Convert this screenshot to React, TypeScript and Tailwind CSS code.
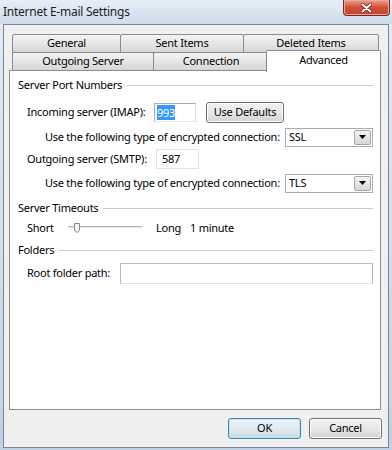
const font = { fontFamily: '"Noto Sans", "Open Sans", sans-serif' };

const Tab = ({ label, w, cls = "" }: { label: string; w: string; cls?: string }) => (
  <div
    className={`${w} ${cls} h-[19px] flex items-center justify-center border border-[#898c95] rounded-t-[2px] bg-gradient-to-b from-[#f4f4f4] via-[#e6e6e6] to-[#d6d6d6] text-[11px] text-black whitespace-nowrap`}
  >
    {label}
  </div>
);

const Header = ({ label }: { label: string }) => (
  <div className="flex items-center pl-[8px] pr-[7px]">
    <span className="text-[11px] whitespace-nowrap">{label}</span>
    <div className="flex-1 ml-[5px] h-px bg-[#c6cbd0]" />
  </div>
);

const Select = ({ value }: { value: string }) => (
  <div className="w-[88px] h-[19px] border border-[#a9adb4] bg-white flex items-center justify-between pl-[3px] pr-px">
    <span className="text-[11px]">{value}</span>
    <div className="w-[17px] h-[15px] border border-[#a2a6ad] rounded-[2px] bg-gradient-to-b from-[#f3f3f3] to-[#d6d6d6] flex items-center justify-center">
      <svg width="7" height="4" viewBox="0 0 7 4">
        <path d="M0 0h7L3.5 4z" fill="#000" />
      </svg>
    </div>
  </div>
);

const WinButton = ({ label, w, primary = false }: { label: string; w: string; primary?: boolean }) => (
  <div
    className={`${w} h-[21px] rounded-[3px] border flex items-center justify-center text-[11px] whitespace-nowrap ${
      primary
        ? "border-[#3c7fb1] shadow-[inset_0_0_0_1px_#bfe6f7] bg-gradient-to-b from-[#eef4f8] via-[#e3ebf1] to-[#ccdae4]"
        : "border-[#707070] shadow-[inset_0_0_0_1px_#fcfcfc] bg-gradient-to-b from-[#f2f2f2] via-[#e8e8e8] to-[#d2d2d2]"
    }`}
  >
    {label}
  </div>
);

export default function App() {
  return (
    <div
      style={font}
      className="w-[392px] h-[450px] overflow-hidden flex flex-col bg-gradient-to-b from-[#e2ebf5] via-[#d3e0ee] to-[#bfd1e5] text-black tracking-[-0.25px]"
    >
      {/* title bar */}
      <div className="h-[24px] flex items-start justify-between bg-gradient-to-b from-[#e6eef7] to-[#cfdcea]">
        <span className="pl-[3px] pt-[3px] text-[12px] text-[#1e1e1e] whitespace-nowrap">Internet E-mail Settings</span>
        <div className="mr-[2px] w-[47px] h-[16px] rounded-b-[4px] border border-t-0 border-[#6e2b22] bg-gradient-to-b from-[#e7a18f] via-[#cf4f38] to-[#c8452f] shadow-[inset_0_0_0_1px_#f0a896] flex items-center justify-center">
          <svg width="11" height="10" viewBox="0 0 11 10">
            <path d="M1.5 1.5l8 7M9.5 1.5l-8 7" stroke="#5a1d15" strokeWidth="3.4" strokeLinecap="round" />
            <path d="M1.5 1.5l8 7M9.5 1.5l-8 7" stroke="#fff" strokeWidth="2" strokeLinecap="round" />
          </svg>
        </div>
      </div>

      {/* dialog body */}
      <div className="ml-[3px] w-[386px] h-[424px] border border-[#7b8796] bg-[#f0f0f0] flex flex-col pl-[5px] pt-[9px]">
        {/* tabs row 1 */}
        <div className="flex ml-[3px]">
          <Tab label="General" w="w-[109px]" />
          <Tab label="Sent Items" w="w-[124px]" cls="-ml-px" />
          <Tab label="Deleted Items" w="w-[136px]" cls="-ml-px" />
        </div>
        {/* tabs row 2 */}
        <div className="flex items-start ml-[3px] -mt-[3px] h-[22px]">
          <Tab label="Outgoing Server" w="w-[142px]" cls="mt-[2px]" />
          <Tab label="Connection" w="w-[116px]" cls="-ml-px mt-[2px]" />
          <div className="relative z-10 -ml-[3px] w-[115px] h-[22px] border border-b-0 border-[#898c95] rounded-t-[2px] bg-white flex justify-center pt-[1px] text-[11px]">
            Advanced
          </div>
        </div>

        {/* tab panel */}
        <div className="-mt-[2px] w-[372px] h-[340px] border border-[#898c95] bg-white flex flex-col whitespace-nowrap">
          <div className="h-[28px] flex flex-col justify-center">
            <Header label="Server Port Numbers" />
          </div>
          <div className="h-[26px] flex items-center pl-[17px]">
            <span className="w-[127px] text-[11px]">Incoming server (IMAP):</span>
            <div className="w-[42px] h-[19px] border border-[#abadb3] border-b-[#e3e9ef] border-r-[#dbdfe6] bg-white flex items-center pl-[2px]">
              <span className="text-[11px] leading-[15px] bg-[#3399ff] text-white">993</span>
            </div>
            <div className="ml-[10px]">
              <WinButton label="Use Defaults" w="w-[78px]" />
            </div>
          </div>
          <div className="h-[24px] flex items-center pl-[35px]">
            <span className="w-[240px] text-[11px]">Use the following type of encrypted connection:</span>
            <Select value="SSL" />
          </div>
          <div className="h-[20px] flex items-center pl-[17px]">
            <span className="w-[129px] text-[11px]">Outgoing server (SMTP):</span>
            <div className="w-[43px] h-[20px] border border-[#dfe3e8] bg-white flex items-center pl-[5px]">
              <span className="text-[11px]">587</span>
            </div>
          </div>
          <div className="h-[28px] flex items-center pl-[35px]">
            <span className="w-[240px] text-[11px]">Use the following type of encrypted connection:</span>
            <Select value="TLS" />
          </div>
          <div className="h-[22px] flex flex-col justify-center">
            <Header label="Server Timeouts" />
          </div>
          <div className="h-[18px] flex items-center pl-[17px] text-[11px]">
            <span className="w-[41px]">Short</span>
            <div className="w-[74px] h-[10px] flex items-center">
              <svg width="74" height="10" viewBox="0 0 74 10">
                <rect x="0" y="3" width="74" height="1" fill="#b5b5b5" />
                <rect x="0" y="4" width="74" height="1" fill="#e6e6e6" />
                <path d="M6.5 0.5h5v7l-2.5 2-2.5-2z" fill="#f4f4f4" stroke="#8a8a8a" />
              </svg>
            </div>
            <span className="ml-[14px] w-[34px]">Long</span>
            <span>1 minute</span>
          </div>
          <div className="h-[26px] flex flex-col justify-center">
            <Header label="Folders" />
          </div>
          <div className="h-[20px] flex items-center pl-[17px]">
            <span className="w-[93px] text-[11px]">Root folder path:</span>
            <div className="w-[253px] h-[21px] border border-[#b5b8bd] border-b-[#dfe3e8] bg-white" />
          </div>
        </div>

        {/* buttons */}
        <div className="mt-[8px] flex justify-end gap-[8px] pr-[6px]">
          <WinButton label="OK" w="w-[73px]" primary />
          <WinButton label="Cancel" w="w-[73px]" />
        </div>
      </div>
    </div>
  );
}
